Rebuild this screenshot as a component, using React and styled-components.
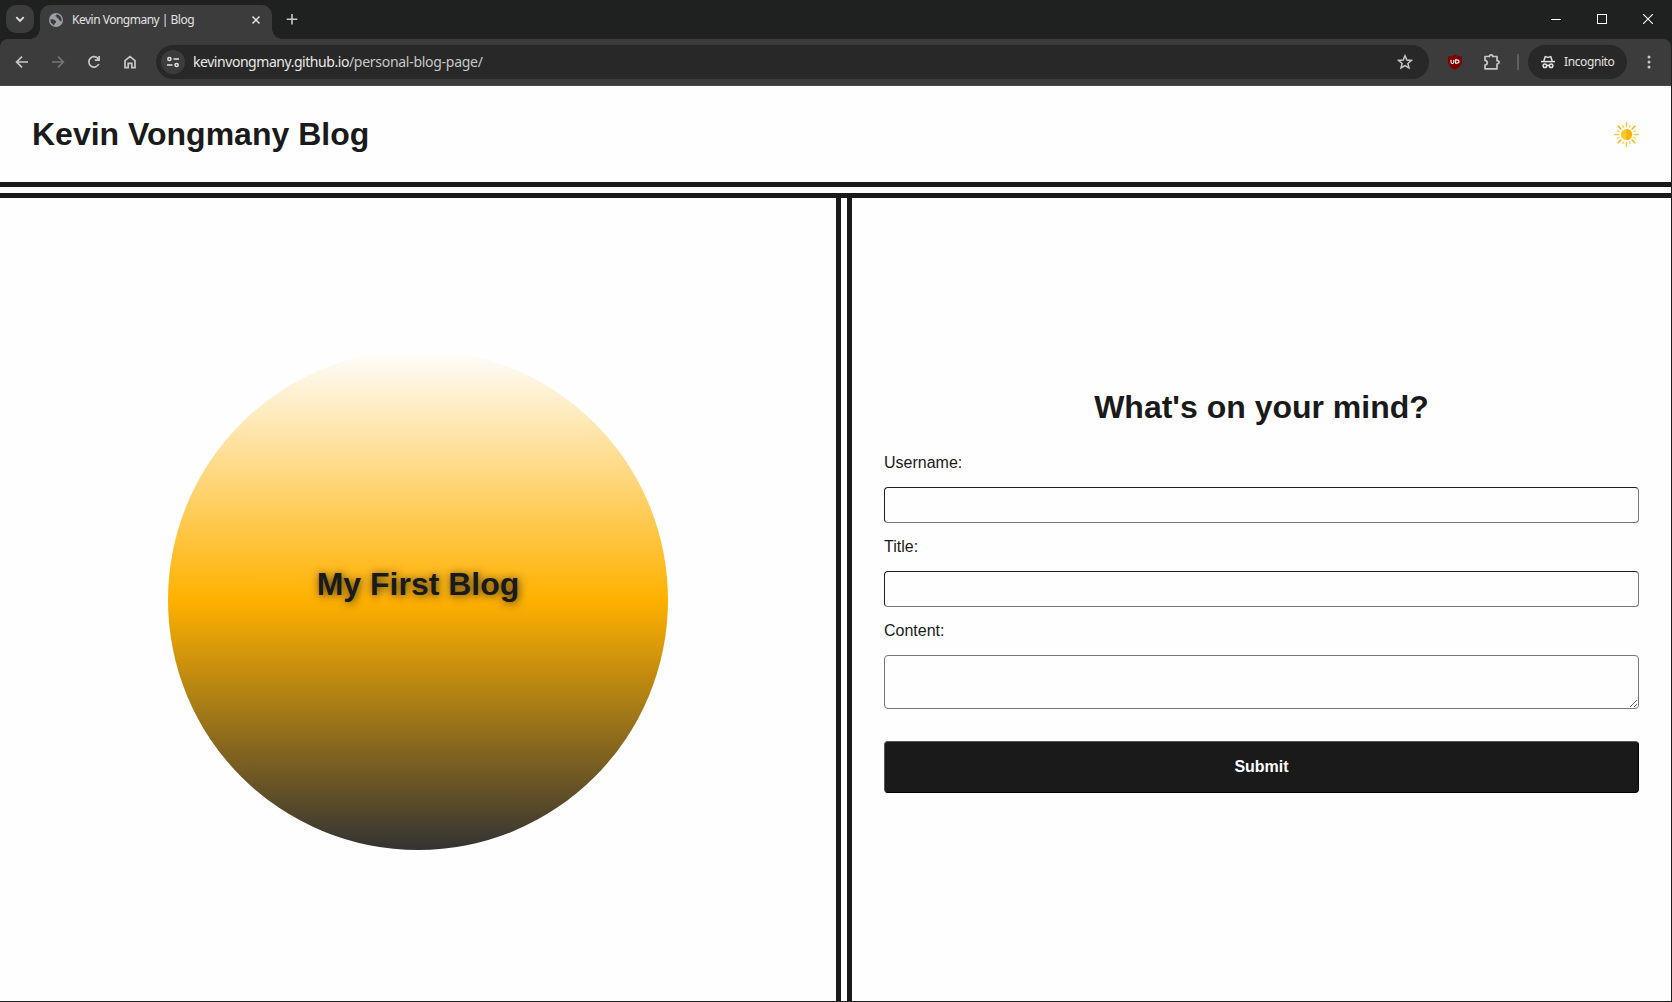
import React from "react";
import styled, { createGlobalStyle } from "styled-components";

const Global = createGlobalStyle`
  * { box-sizing: border-box; }
  body { margin: 0; background: #1c1f1e; overflow: hidden; }
  h1, h2 { margin: 0; }
`;

const Window = styled.div`
  width: 1672px;
  height: 1002px;
  display: flex;
  flex-direction: column;
  padding: 0 1px 1px 0;
  background: #1f2120;
  font-family: "Noto Sans", "Open Sans", sans-serif;
`;

const TabStrip = styled.div`
  height: 39px;
  flex: none;
  display: flex;
  align-items: flex-start;
  padding: 5px 0 0 6px;
  background: #1f2120;
`;

const TabSearch = styled.div`
  width: 28px;
  height: 28px;
  border-radius: 10px;
  background: #3c3c3c;
  display: grid;
  place-items: center;
  margin-right: 6px;
`;

const Tab = styled.div`
  position: relative;
  width: 232px;
  height: 34px;
  padding: 0 11px 5px 9px;
  border-radius: 10px 10px 0 0;
  background: #3c3c3c;
  display: flex;
  align-items: center;
  color: #e3e3e3;
  font: 12px/16px "Noto Sans", sans-serif;
  &::before, &::after {
    content: "";
    position: absolute;
    bottom: 0;
    width: 10px;
    height: 10px;
  }
  &::before { left: -10px; background: radial-gradient(circle at 0 0, transparent 9.5px, #3c3c3c 10px); }
  &::after { right: -10px; background: radial-gradient(circle at 100% 0, transparent 9.5px, #3c3c3c 10px); }
`;

const TabTitle = styled.span`
  margin-left: 9px;
  flex: 1;
  white-space: nowrap;
  letter-spacing: -0.5px;
`;

const NewTab = styled.div`
  margin: 7px 0 0 13px;
  height: 14px;
  display: flex;
`;

const WindowControls = styled.div`
  display: flex;
  gap: 36px;
  margin: 9px 18px 0 auto;
`;

const Toolbar = styled.div`
  height: 47px;
  flex: none;
  display: flex;
  align-items: center;
  padding: 0 14px 1px 14px;
  background: #3c3c3c;
  border-bottom: 1px solid #4b4b4b;
  border-radius: 8px 8px 0 0;
`;

const NavIcons = styled.div`
  display: flex;
  gap: 20px;
  width: 142px;
`;

const AddressBar = styled.div`
  width: 1273px;
  height: 34px;
  border-radius: 17px;
  background: #282828;
  display: flex;
  align-items: center;
  padding: 0 16px 0 5px;
  color: #c7c7c7;
  font: 14px/20px "Noto Sans", sans-serif;
`;

const SiteInfo = styled.div`
  width: 24px;
  height: 24px;
  border-radius: 50%;
  background: #3c3c3c;
  display: grid;
  place-items: center;
  margin-right: 8px;
`;

const Url = styled.span`
  flex: 1;
  letter-spacing: -0.28px;
`;

const Host = styled.span`
  color: #e8e8e8;
  letter-spacing: -0.45px;
`;

const Extensions = styled.div`
  display: flex;
  align-items: center;
  margin-left: 18px;
  flex: 1;
`;

const ExtensionIcons = styled.div`
  display: flex;
  align-items: center;
  gap: 20px;
`;

const Divider = styled.div`
  width: 2px;
  height: 16px;
  background: #5e5e5e;
  margin: 0 9px 0 16px;
`;

const Incognito = styled.div`
  width: 99px;
  height: 34px;
  border-radius: 17px;
  background: #282828;
  color: #e3e3e3;
  font: 12px/16px "Noto Sans", sans-serif;
  letter-spacing: -0.4px;
  display: flex;
  align-items: center;
  gap: 8px;
  padding-left: 12px;
`;

const Menu = styled.div`
  margin-left: auto;
  display: flex;
`;

const Page = styled.div`
  flex: 1;
  display: flex;
  flex-direction: column;
  background: #fefefe;
  color: #1a1a1a;
  font-family: "Liberation Sans", Arial, sans-serif;
`;

const Header = styled.header`
  height: 112px;
  padding: 0 32px;
  border-bottom: 16px double #1a1a1a;
  display: flex;
  align-items: center;
  justify-content: space-between;
`;

const Heading = styled.h1`
  font-size: 32px;
  line-height: 37px;
  font-weight: 700;
  text-align: ${(p) => (p.$centered ? "center" : "left")};
`;

const Main = styled.main`
  flex: 1;
  display: flex;
`;

const Aside = styled.aside`
  width: 852px;
  border-right: 16px double #1a1a1a;
  display: flex;
  align-items: center;
  justify-content: center;
`;

const Circle = styled.div`
  width: 500px;
  height: 500px;
  border-radius: 50%;
  background: linear-gradient(180deg, #fefefe 0%, #ffb100 50%, #333 100%);
  display: flex;
  align-items: center;
  justify-content: center;
  padding-bottom: 30px;
  text-shadow: 1px 1px 8px rgba(26, 26, 26, 0.8);
`;

const Section = styled.section`
  flex: 1;
  padding: 0 32px;
  display: flex;
  flex-direction: column;
  justify-content: center;
`;

const Form = styled.form`
  display: flex;
  flex-direction: column;
  margin: 28px 0 17px;
`;

const Label = styled.label`
  font-size: 16px;
  line-height: 18px;
  margin-bottom: 15px;
`;

const Input = styled.input`
  height: 36px;
  border: 1px solid #767676;
  border-top-color: #1f1f1f;
  border-left-color: #1f1f1f;
  border-radius: 4px;
  background: #fefefe;
  margin-bottom: 15px;
`;

const TextArea = styled.textarea`
  height: 54px;
  border: 1px solid #767676;
  border-radius: 4px;
  background: #fefefe;
  resize: vertical;
  margin-bottom: 32px;
`;

const Submit = styled.button`
  height: 52px;
  border: 1px solid #000;
  border-top-color: #555;
  border-left-color: #555;
  border-radius: 4px;
  background: #1a1a1a;
  color: #fefefe;
  font: 700 16px "Liberation Sans", Arial, sans-serif;
`;

const Icon = ({ size = 16, color = "#c7c7c7", width = 1.7, children }) => (
  <svg width={size} height={size} viewBox={`0 0 ${size} ${size}`} fill="none" stroke={color} strokeWidth={width}>
    {children}
  </svg>
);

const Sun = () => {
  const rays = Array.from({ length: 8 }, (_, i) => i * 45);
  return (
    <svg width="25" height="25" viewBox="-12.5 -12.5 25 25" strokeLinecap="round">
      {rays.map((a) => (
        <path key={a} d="M0 -7.9V-11.8" stroke={a % 90 ? "#ffb10a" : "#ffc928"} strokeWidth="1.5" transform={`rotate(${a})`} />
      ))}
      {rays.map((a) => (
        <path key={a} d="M0 -8V-9.6" stroke="#ffd54f" strokeWidth="1.4" transform={`rotate(${a + 22.5})`} />
      ))}
      <circle r="5.6" fill="#ffca28" />
      <path d="M0 -5.6A5.6 5.6 0 0 1 0 5.6Z" fill="#ffb300" />
    </svg>
  );
};

export default function App() {
  return (
    <Window>
      <Global />
      <TabStrip>
        <TabSearch>
          <Icon size={10} color="#e3e3e3" width={1.8}><path d="M1.3 3.2L5 6.9L8.7 3.2" /></Icon>
        </TabSearch>
        <Tab>
          <svg width="14" height="14" viewBox="0 0 14 14">
            <circle cx="7" cy="7" r="7" fill="#9aa0a6" />
            <path d="M1.5 6.2C3.5 6.2 5.3 6.1 5.6 7.1S7.2 7.6 7.1 8.9 5.2 9.5 5.2 12.2C2.6 11.2 1.1 8.8 1.5 6.2ZM8.2 1.4C6.2 2 5.8 3.1 7.2 3.6S7.3 5.5 9 5.5 9 7.1 10.6 7.3 10.6 8.3 12.2 8.7C13.4 5.2 11.4 2 8.2 1.4Z" fill="#3c3c3c" />
          </svg>
          <TabTitle>Kevin Vongmany | Blog</TabTitle>
          <Icon size={10} color="#e3e3e3" width={1.5}><path d="M1.5 1.5L8.5 8.5M8.5 1.5L1.5 8.5" /></Icon>
        </Tab>
        <NewTab>
          <Icon size={14} width={1.6}><path d="M7 2V12.5M1.7 7.2H12.3" /></Icon>
        </NewTab>
        <WindowControls>
          <Icon size={10} color="#fff" width={1}><path d="M0 5.5H10" /></Icon>
          <Icon size={10} color="#fff" width={1}><rect x=".5" y=".5" width="9" height="9" /></Icon>
          <Icon size={10} color="#fff" width={1.1}><path d="M0 0L10 10M10 0L0 10" /></Icon>
        </WindowControls>
      </TabStrip>
      <Toolbar>
        <NavIcons>
          <Icon><path d="M14 8H2.8M8 2.6L2.6 8L8 13.4" /></Icon>
          <Icon color="#747474"><path d="M2 8H13.2M8 2.6L13.4 8L8 13.4" /></Icon>
          <Icon><path d="M12.8 10A5.2 5.2 0 1 1 12.2 4.8L13 5.8M13.1 2V6.2H8.8" /></Icon>
          <Icon><path d="M3 13.7V6.6L8 2.7L13 6.6V13.7H9.8V9.4H6.2V13.7Z" /></Icon>
        </NavIcons>
        <AddressBar>
          <SiteInfo>
            <Icon size={14} color="#e3e3e3" width={1.5}>
              <circle cx="3.4" cy="4" r="1.6" /><path d="M7.5 4H13M1 10H6.5" /><circle cx="10.6" cy="10" r="1.6" />
            </Icon>
          </SiteInfo>
          <Url><Host>kevinvongmany.github.io</Host>/personal-blog-page/</Url>
          <Icon width={1.5}><path d="M8 1.7L9.8 6L14.4 6.4L10.9 9.4L12 13.9L8 11.5L4 13.9L5.1 9.4L1.6 6.4L6.2 6Z" /></Icon>
        </AddressBar>
        <Extensions>
          <ExtensionIcons>
            <svg width="16" height="16" viewBox="0 0 16 16">
              <path d="M8 .5C10 2 12.5 2.2 15 2.2V7C15 11 12 14 8 15.7C4 14 1 11 1 7V2.2C3.5 2.2 6 2 8 .5Z" fill="#800000" />
              <path d="M4 5.7V8.1Q4 9.5 5.4 9.5T6.8 8.1V5.7M8.6 5.9V9.3H9.5Q12 9.2 12 7.6T9.5 5.9Z" fill="none" stroke="#fff" strokeWidth="1.1" />
            </svg>
            <Icon size={18}>
              <path d="M2 3.5H6.4C6.4 1.2 9.8 1.2 9.8 3.5H14V7.6C16.7 7.6 16.7 11 14 11V15.8H2V12C5 11.7 5 7.7 2 7.4Z" strokeLinejoin="round" />
            </Icon>
          </ExtensionIcons>
          <Divider />
          <Incognito>
            <Icon color="#e3e3e3" width={1.5}>
              <path d="M1 7.6H15" /><path d="M3.8 7L5.3 2.6L8 3.4L10.7 2.6L12.2 7" strokeLinejoin="round" /><circle cx="4.9" cy="11.8" r="1.8" /><circle cx="11.1" cy="11.8" r="1.8" /><path d="M6.7 11.5H9.3" />
            </Icon>
            Incognito
          </Incognito>
          <Menu>
            <svg width="16" height="16" viewBox="0 0 16 16" fill="#c7c7c7">
              <circle cx="8" cy="3" r="1.5" /><circle cx="8" cy="8" r="1.5" /><circle cx="8" cy="13" r="1.5" />
            </svg>
          </Menu>
        </Extensions>
      </Toolbar>
      <Page>
        <Header>
          <Heading>Kevin Vongmany Blog</Heading>
          <Sun />
        </Header>
        <Main>
          <Aside>
            <Circle><Heading>My First Blog</Heading></Circle>
          </Aside>
          <Section>
            <Heading as="h2" $centered>What's on your mind?</Heading>
            <Form>
              <Label>Username:</Label>
              <Input />
              <Label>Title:</Label>
              <Input />
              <Label>Content:</Label>
              <TextArea />
              <Submit type="button">Submit</Submit>
            </Form>
          </Section>
        </Main>
      </Page>
    </Window>
  );
}
